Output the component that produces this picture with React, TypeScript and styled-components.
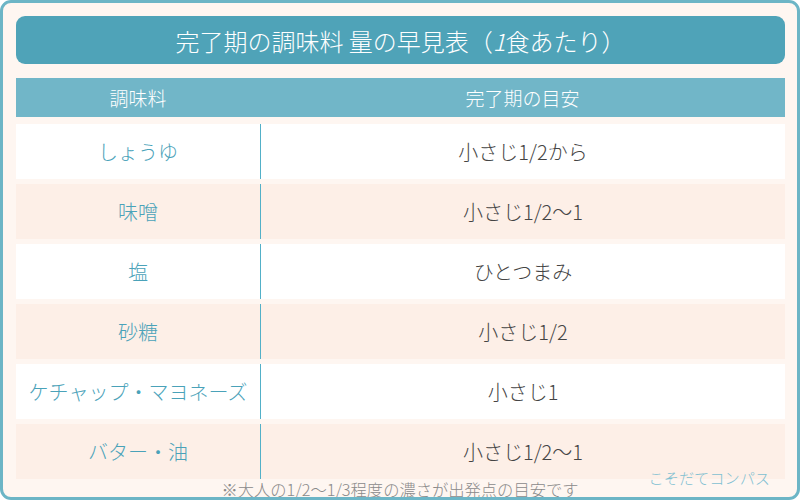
import React from "react";
import styled, { createGlobalStyle } from "styled-components";

const Global = createGlobalStyle`
  html, body { margin: 0; padding: 0; }
  body { font-family: "Noto Sans CJK JP", "Noto Sans", sans-serif; font-weight: 300; }
`;

const Frame = styled.div`
  position: relative;
  box-sizing: border-box;
  width: 800px;
  height: 500px;
  border: 3px solid #6cb5c6;
  border-radius: 11px;
  background: #fef6f1;
  padding: 13px 12px 0 13px;
  overflow: hidden;
  display: flex;
  flex-direction: column;
  & > * { flex-shrink: 0; }
`;

const Title = styled.h1`
  margin: 0;
  height: 48px;
  border-radius: 9px;
  background: #4fa3b8;
  color: #fff;
  font-size: 24px;
  font-weight: 300;
  display: flex;
  align-items: center;
  justify-content: center;
  letter-spacing: 0;
`;

const Num = styled.span`
  font-style: italic;
`;

const Table = styled.div`
  margin-top: 14px;
  display: flex;
  flex-direction: column;
  gap: 5px;
`;

const Head = styled.div`
  height: 39px;
  background: #71b6c8;
  display: grid;
  grid-template-columns: 244px 1fr;
  color: #fff;
  font-size: 19px;
  margin-bottom: 2px;
`;

const HeadCell = styled.div`
  display: flex;
  align-items: center;
  justify-content: center;
`;

const Row = styled.div<{ $alt: boolean }>`
  height: 55px;
  background: ${(p) => (p.$alt ? "#fdefe7" : "#ffffff")};
  display: grid;
  grid-template-columns: 245px 1fr;
  font-size: 20px;
`;

const Name = styled.div`
  display: flex;
  align-items: center;
  justify-content: center;
  color: #4aa2b9;
  border-right: 1px solid #52b0c8;
`;

const Amount = styled.div`
  display: flex;
  align-items: center;
  justify-content: center;
  color: #444;
`;

const Note = styled.p`
  margin: 0;
  text-align: center;
  font-size: 16.3px;
  line-height: 20px;
  color: #8a8a8a;
  margin-left: -13px;
  margin-right: -12px;
`;

const Brand = styled.div`
  position: absolute;
  right: 27px;
  bottom: 9px;
  font-size: 15.2px;
  color: #7fc0d1;
`;

const rows: [string, string][] = [
  ["しょうゆ", "小さじ1/2から"],
  ["味噌", "小さじ1/2〜1"],
  ["塩", "ひとつまみ"],
  ["砂糖", "小さじ1/2"],
  ["ケチャップ・マヨネーズ", "小さじ1"],
  ["バター・油", "小さじ1/2〜1"],
];

export default function App() {
  return (
    <>
      <Global />
      <Frame>
        <Title>
          完了期の調味料 量の早見表（<Num>1</Num>食あたり）
        </Title>
        <Table>
          <Head>
            <HeadCell>調味料</HeadCell>
            <HeadCell>完了期の目安</HeadCell>
          </Head>
          {rows.map(([n, a], i) => (
            <Row key={n} $alt={i % 2 === 1}>
              <Name>{n}</Name>
              <Amount>{a}</Amount>
            </Row>
          ))}
        </Table>
        <Note>※大人の1/2〜1/3程度の濃さが出発点の目安です</Note>
        <Brand>こそだてコンパス</Brand>
      </Frame>
    </>
  );
}
